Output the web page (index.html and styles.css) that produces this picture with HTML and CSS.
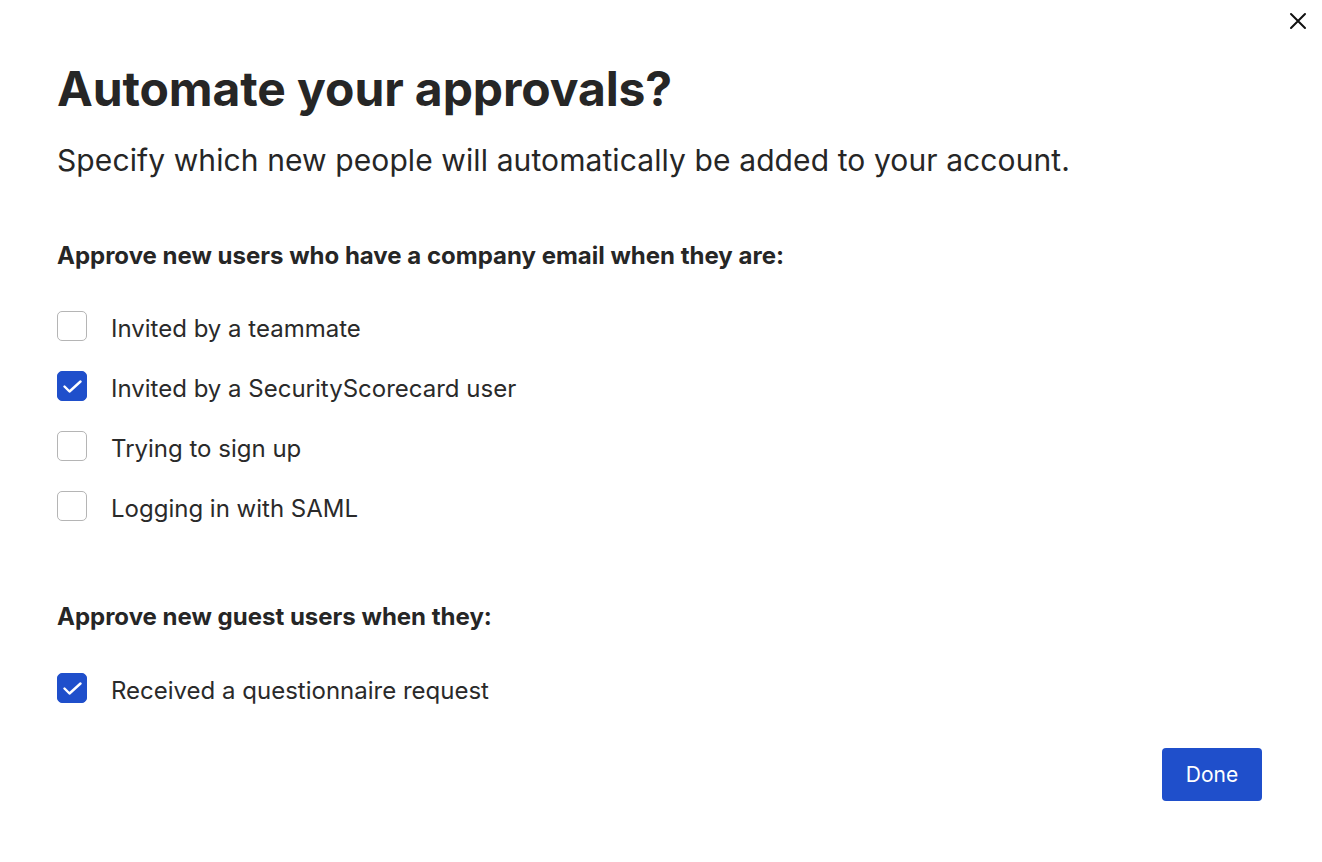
FILE: index.html
```html
<!DOCTYPE html>
<html lang="en">

<head>
  <meta charset="UTF-8">
  <meta name="viewport" content="width=device-width, initial-scale=1.0">
  <title>Automate your approvals?</title>
  <link rel="stylesheet" href="styles.css">
</head>

<body>
  <div class="modal">
    <button class="close" aria-label="Close">
      <svg width="18" height="18" viewBox="0 0 18 18">
        <path d="M2 2 L16 16 M16 2 L2 16" stroke="#111" stroke-width="2" stroke-linecap="round" />
      </svg>
    </button>

    <h1>Automate your approvals?</h1>
    <p class="subtitle">Specify which new people will automatically be added to your account.</p>

    <!-- Company email users -->
    <h2>Approve new users who have a company email when they are:</h2>
    <div class="options">
      <label class="option">
        <span class="box"></span>
        <span class="text">Invited by a teammate</span>
      </label>
      <label class="option">
        <span class="box checked">
          <svg width="19" height="13" viewBox="0 0 19 13"><path d="M1.5 6.5 L6.5 11.5 L17.5 1.5" fill="none" stroke="#fff" stroke-width="2.4" stroke-linecap="round" stroke-linejoin="round" /></svg>
        </span>
        <span class="text">Invited by a SecurityScorecard user</span>
      </label>
      <label class="option">
        <span class="box"></span>
        <span class="text">Trying to sign up</span>
      </label>
      <label class="option">
        <span class="box"></span>
        <span class="text">Logging in with SAML</span>
      </label>
    </div>

    <!-- Guest users -->
    <h2 class="second">Approve new guest users when they:</h2>
    <div class="options last">
      <label class="option">
        <span class="box checked">
          <svg width="19" height="13" viewBox="0 0 19 13"><path d="M1.5 6.5 L6.5 11.5 L17.5 1.5" fill="none" stroke="#fff" stroke-width="2.4" stroke-linecap="round" stroke-linejoin="round" /></svg>
        </span>
        <span class="text">Received a questionnaire request</span>
      </label>
    </div>

    <div class="actions">
      <button class="done">Done</button>
    </div>
  </div>
</body>

</html>
```

FILE: styles.css
```css
/* General */
body {
  font-family: 'Inter', 'Noto Sans', sans-serif;
  background: #fff;
  color: #262626;
  margin: 0;
  padding: 0;
}

.modal {
  position: relative;
  padding: 58px 60px 0 57px;
}

.close {
  position: absolute;
  top: 12px;
  right: 15px;
  background: none;
  border: none;
  padding: 0;
  cursor: pointer;
}

h1 {
  font-size: 48px;
  font-weight: 700;
  margin: 0;
  line-height: 62px;
  letter-spacing: -0.1px;
}

.subtitle {
  font-size: 30px;
  margin: 21px 0 0;
  line-height: 38px;
  letter-spacing: 0.1px;
}

h2 {
  font-size: 24px;
  font-weight: 700;
  margin: 61px 0 0;
  line-height: 32px;
}

h2.second {
  margin-top: 76px;
}

/* Checkbox rows */
.options {
  display: flex;
  flex-direction: column;
  gap: 22px;
  margin-top: 35px;
}

.options.last {
  margin-top: 36px;
}

.option {
  display: flex;
  align-items: center;
  gap: 24px;
  font-size: 24px;
  line-height: 32px;
  color: #2a2a2a;
  cursor: pointer;
}

.option .text {
  padding-top: 6px;
}

.box {
  width: 30px;
  height: 30px;
  box-sizing: border-box;
  border: 1.5px solid #b5b5b5;
  border-radius: 5px;
  display: flex;
  align-items: center;
  justify-content: center;
}

.box.checked {
  background: #1f4fcb;
  border-color: #1f4fcb;
}

/* Footer */
.actions {
  display: flex;
  justify-content: flex-end;
  margin-top: 41px;
}

.done {
  width: 100px;
  height: 53px;
  background: #1f4fcb;
  color: #fff;
  border: none;
  border-radius: 4px;
  font-family: inherit;
  font-size: 21px;
  cursor: pointer;
}
```
